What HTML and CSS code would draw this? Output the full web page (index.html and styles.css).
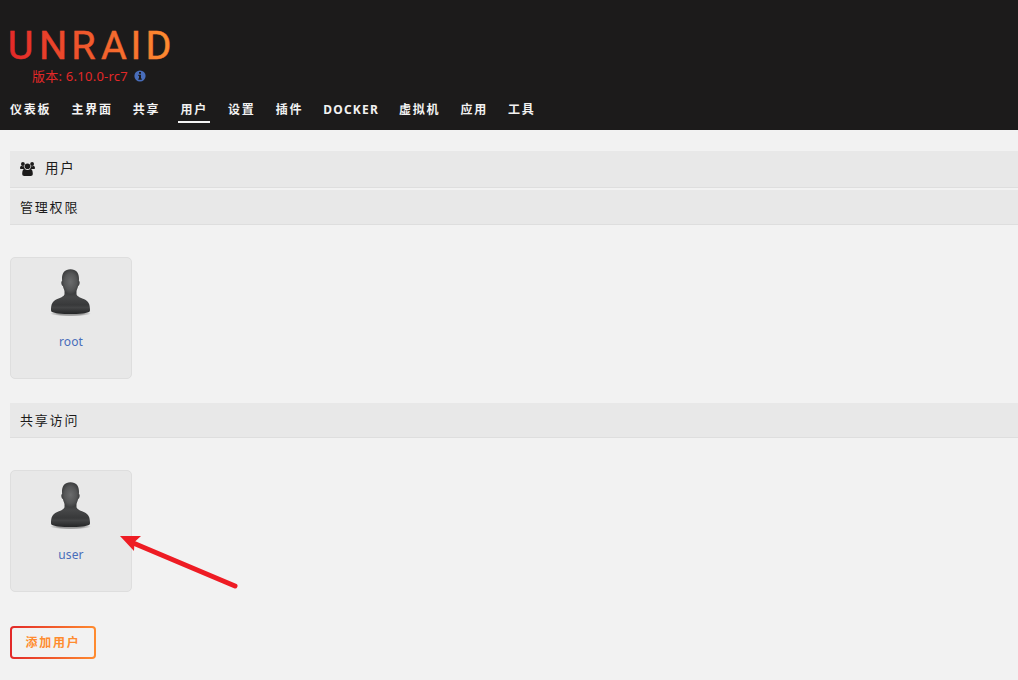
FILE: index.html
```html
<!DOCTYPE html>
<html lang="zh-CN">
<head>
<meta charset="utf-8">
<title>用户</title>
<link rel="stylesheet" href="styles.css">
</head>
<body>
<svg class="defs" width="0" height="0" aria-hidden="true">
  <defs>
    <linearGradient id="brand" gradientUnits="userSpaceOnUse" x1="0" y1="20" x2="160" y2="0"><stop offset="0" stop-color="#e32929"/><stop offset="1" stop-color="#ff8d30"/></linearGradient>
    <radialGradient id="head" cx=".5" cy=".5" r=".6"><stop offset="0" stop-color="#6b6c6d"/><stop offset=".55" stop-color="#555657"/><stop offset="1" stop-color="#2f3031"/></radialGradient>
    <linearGradient id="body" x1="0" y1="0" x2="0" y2="1"><stop offset="0" stop-color="#303132"/><stop offset=".35" stop-color="#464748"/><stop offset=".65" stop-color="#38393a"/><stop offset=".75" stop-color="#434445"/><stop offset="1" stop-color="#242526"/></linearGradient>
    <radialGradient id="shade"><stop offset=".6" stop-color="#000" stop-opacity=".35"/><stop offset="1" stop-color="#000" stop-opacity="0"/></radialGradient>
    <symbol id="person" viewBox="0 0 46 48">
      <ellipse cx="22.500" cy="44.500" rx="20.500" ry="3" fill="url(#shade)"/>
      <path d="M16.500 19h12v6.200c.8 2.600 4.500 3.600 7.800 5 4.200 1.800 5.700 5 5.700 10.800 0 .8-.2 1.400-.6 1.700-3 1.500-10.500 2.300-18.900 2.300s-15.900-.8-18.900-2.300c-.4-.3-.6-.9-.6-1.700 0-5.800 1.500-9 5.700-10.800 3.300-1.400 7-2.400 7.800-5z" fill="url(#body)"/>
      <path d="M22.500.2c5.600 0 8.700 3.700 8.500 9.800l-.1 2c1.300.1.900 4.500-.8 5-.9 4.400-3.800 8.500-7.600 8.500s-6.700-4.100-7.600-8.500c-1.700-.5-2.100-4.900-.8-5l-.1-2C13.800 3.900 16.900.2 22.500.2z" fill="url(#head)"/>
    </symbol>
  </defs>
</svg>
<header class="header">
  <div class="brand">
    <svg class="logo" width="166" height="32"><text class="logo-text" x="-2.200 29 61.200 90.900 120.500 135.600" y="29" fill="url(#brand)" stroke="url(#brand)">UNRAID</text></svg>
    <div class="version"><span>版本: 6.10.0-rc7</span>
      <svg width="12" height="12" viewBox="0 0 12 12"><circle cx="6" cy="6" r="5.600" fill="#486dba"/><path d="M5 2h2v1.700H5zM4.300 4.700H7v3.700h.8v1.300H4.300V8.400H5V6h-.7z" fill="#1c1b1b"/></svg>
    </div>
  </div>
  <nav class="nav">
    <a>仪表板</a><a>主界面</a><a>共享</a><a class="active">用户</a><a>设置</a><a>插件</a><a class="latin">DOCKER</a><a>虚拟机</a><a>应用</a><a>工具</a>
  </nav>
</header>
<main class="content">
  <div class="title page-title">
    <svg width="15" height="14" viewBox="0 0 15 14" fill="#1c1b1b"><circle cx="2.900" cy="2" r="1.900"/><circle cx="12.100" cy="2" r="1.900"/><circle cx="7.500" cy="4.300" r="2.800"/><path d="M0 6.300C0 4.700.7 3.800 1.500 3.800c1 .7 1.800.7 2.600.3C4 5.500 4.500 6.300 5 7H1.200C.5 7 0 6.800 0 6.300zM15 6.300c0-1.600-.7-2.500-1.500-2.500-1 .7-1.800.7-2.600.3.100 1.400-.4 2.200-.9 2.900h3.800c.7 0 1.200-.2 1.200-.7zM2.200 11.800c0-2.700.8-4.700 2.500-4.700 1.900 1.300 3.700 1.300 5.600 0 1.700 0 2.500 2 2.500 4.700 0 1.400-.8 2.200-2.100 2.200H4.300c-1.300 0-2.100-.8-2.100-2.200z"/></svg>
    <span>用户</span>
  </div>
  <div class="title">管理权限</div>
  <div class="users">
    <div class="card"><svg class="avatar" width="46" height="48"><use href="#person"/></svg><a>root</a></div>
  </div>
  <div class="title">共享访问</div>
  <div class="users">
    <div class="card"><svg class="avatar" width="46" height="48"><use href="#person"/></svg><a>user</a></div>
  </div>
  <button class="add">添加用户</button>
</main>
<svg class="arrow" width="122" height="58" viewBox="0 0 122 58"><path d="M14 7.500L117 51" stroke="#ee1c24" stroke-width="5" stroke-linecap="round"/><path d="M2 1h21l-6.500 6-.5 9z" fill="#ee1c24"/></svg>
</body>
</html>
```
FILE: styles.css
```css
* { box-sizing: border-box; }
body {
  margin: 0;
  height: 680px;
  overflow: hidden;
  background: #f2f2f2;
  color: #1c1b1b;
  font-family: "Noto Sans", "Noto Sans CJK SC", sans-serif;
  font-size: 13px;
}
.defs { position: absolute; }
.header {
  height: 130px;
  padding: 30px 0 0 10px;
  background: #1c1b1b;
}
.brand { height: 69px; }
.logo { display: block; overflow: visible; }
.logo-text {
  font-family: Roboto, sans-serif;
  font-size: 39.500px;
  font-weight: 400;
  stroke-width: .5px;
}
.version {
  display: flex;
  align-items: center;
  gap: 6px;
  height: 18px;
  margin-top: 5px;
  padding-left: 22px;
  color: #e22828;
  letter-spacing: .25px;
  line-height: 18px;
  white-space: nowrap;
}
.nav {
  display: flex;
  gap: 16px;
  margin-left: -2px;
}
.nav a {
  height: 24px;
  padding: 1px 2px 0;
  color: #f2f2f2;
  font-size: 12px;
  font-weight: 700;
  letter-spacing: 1.800px;
  line-height: 20px;
  white-space: nowrap;
}
.nav .latin { letter-spacing: 1.200px; }
.nav .active { border-bottom: 2px solid #f2f2f2; }
.content { padding: 21px 0 0 10px; }
.title {
  height: 35px;
  padding-left: 10px;
  border-bottom: 1px solid #dedede;
  background: #e8e8e8;
  font-size: 13px;
  letter-spacing: 1.800px;
  line-height: 34px;
}
.page-title {
  display: flex;
  align-items: center;
  gap: 10px;
  height: 37px;
  margin-bottom: 2px;
  font-size: 13.500px;
}
.page-title span { margin-top: -2px; }
.users { padding: 32px 0 24px; }
.card {
  display: flex;
  flex-direction: column;
  align-items: center;
  width: 122px;
  height: 122px;
  padding-top: 11px;
  border: 1px solid #dedede;
  border-radius: 5px;
  background: #e8e8e8;
}
.card a {
  margin-top: 16px;
  color: #486dba;
  font-size: 12px;
  letter-spacing: .1px;
  line-height: 18px;
}
.add {
  display: block;
  width: 86px;
  height: 33px;
  margin-top: 10px;
  padding: 0;
  border: 2px solid transparent;
  border-radius: 4px;
  background: linear-gradient(#f2f2f2, #f2f2f2) padding-box, linear-gradient(90deg, #e22828, #ff8c2f) border-box;
  color: #ff8c2f;
  font: 700 12px/28px "Noto Sans", "Noto Sans CJK SC", sans-serif;
  letter-spacing: 1.800px;
}
.arrow {
  position: absolute;
  left: 118px;
  top: 535px;
}
```
